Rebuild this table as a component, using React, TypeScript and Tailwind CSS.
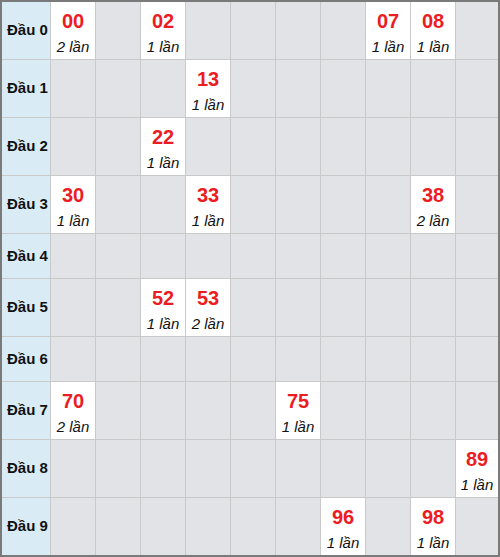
import React from "react";

// số lần xuất hiện theo đầu / đuôi
const counts: Record<string, number> = {
  "00": 2,
  "02": 1,
  "07": 1,
  "08": 1,
  "13": 1,
  "22": 1,
  "30": 1,
  "33": 1,
  "38": 2,
  "52": 1,
  "53": 2,
  "70": 2,
  "75": 1,
  "89": 1,
  "96": 1,
  "98": 1,
};

const rows = Array.from({ length: 10 }, (_, i) => i);
const cols = Array.from({ length: 10 }, (_, i) => i);

export default function App() {
  return (
    <div
      className="h-[557px] w-[500px] border-2 border-[#7a7a7a] bg-[#c9c9c9]"
      style={{ fontFamily: '"Liberation Sans", Arial, sans-serif' }}
    >
      <div className="grid grid-cols-[48px_repeat(9,44px)_1fr] gap-px">
        {rows.map((r) => {
          const hasAny = cols.some((c) => counts[`${r}${c}`]);
          return (
            <React.Fragment key={r}>
              <div
                className={
                  "flex items-center bg-[#d9ecf5] pl-[5px] text-[15px] font-bold text-[#111] " +
                  (hasAny ? "h-[57px]" : "h-[44px]")
                }
              >
                Đầu {r}
              </div>
              {cols.map((c) => {
                const num = `${r}${c}`;
                const n = counts[num];
                if (!n) return <div key={c} className="bg-[#e2e3e6]" />;
                return (
                  <div
                    key={c}
                    className="flex flex-col items-center justify-center bg-white pt-[3px]"
                  >
                    <span className="text-[20px] font-bold leading-[27px] text-[#ec1c24]">
                      {num}
                    </span>
                    <span className="mt-[2px] text-[15px] italic leading-[20px] text-[#111]">
                      {n} lần
                    </span>
                  </div>
                );
              })}
            </React.Fragment>
          );
        })}
      </div>
    </div>
  );
}
